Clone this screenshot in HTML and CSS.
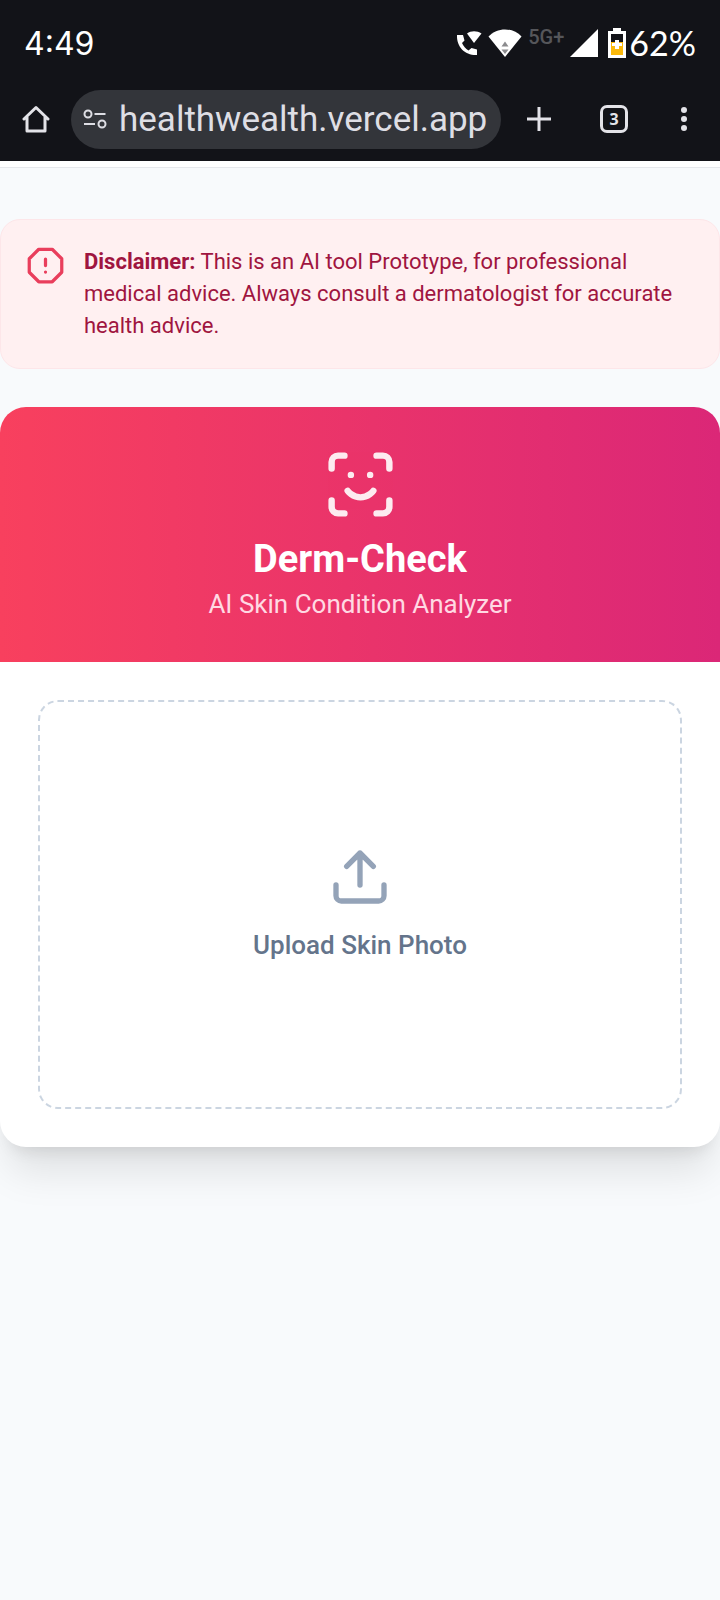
FILE: index.html
```html
<!DOCTYPE html>
<html lang="en">
  <head>
    <meta charset="utf-8">
    <meta name="viewport" content="width=device-width, initial-scale=1">
    <title>Derm-Check</title>
    <link rel="stylesheet" href="styles.css">
  </head>

  <body>
    <header class="browser">
      <div class="status-bar">
        <span class="clock">4:49</span>
        <div class="status-icons">
          <!-- wifi calling -->
          <svg width="26" height="26" viewBox="0 0 26 26" fill="#fff">
            <path d="M1 5C.5 17 9 25.500 21 25V19.500L15.500 18L12.500 20.500C9.500 18.500 7.500 16 6 13L8.500 10.500L7 5Z"/>
            <path d="M11 3.500C15 .5 21 .5 25.500 3.500L18 13Z"/>
          </svg>
          <!-- wifi -->
          <svg width="34" height="28" viewBox="0 0 34 28">
            <path d="M.5 7.500C9 -2 25 -2 33.500 7.500L17 28Z" fill="#fff"/>
            <path d="M17 12.500L20.500 17.500H13.500ZM17 25L13.500 20.500H20.500Z" fill="#8b8b8e"/>
          </svg>
          <span class="network">5G+</span>
          <!-- signal -->
          <svg width="28" height="28" viewBox="0 0 28 28">
            <path d="M28 0V28H0Z" fill="#fff"/>
          </svg>
          <div class="battery">
            <svg width="18" height="30" viewBox="0 0 18 30">
              <path d="M5 0H13V3H18V30H0V3H5Z" fill="#fff"/>
              <path d="M3 6H15V14H3Z" fill="#121318"/>
              <path d="M3 14H15V27H3Z" fill="#fbb90b"/>
              <path d="M7 12H11V15H14V18H11V21H7V18H4V15H7Z" fill="#fff"/>
            </svg>
            <span>62%</span>
          </div>
        </div>
      </div>

      <div class="toolbar">
        <button class="tool-button" type="button" aria-label="Home">
          <svg width="28" height="28" viewBox="0 0 28 28" fill="none" stroke="#e3e3e8" stroke-width="3" stroke-linecap="round" stroke-linejoin="round">
            <path d="M2 14L14 2.500L26 14M5 12V26H23V12"/>
          </svg>
        </button>
        <div class="address">
          <svg width="24" height="20" viewBox="0 0 24 20" fill="none" stroke="#dedee4" stroke-width="2">
            <circle cx="5" cy="5" r="3.500"/>
            <path d="M11.500 5H22.500M1 15H12"/>
            <circle cx="19" cy="15" r="3.500"/>
          </svg>
          <input class="address-input" type="text" aria-label="Address" value="healthwealth.vercel.app">
        </div>
        <div class="tools">
          <button class="tool-button" type="button" aria-label="New tab">
            <svg width="24" height="24" viewBox="0 0 24 24" fill="none" stroke="#e3e3e8" stroke-width="3">
              <path d="M12 0V24M0 12H24"/>
            </svg>
          </button>
          <button class="tabs-button" type="button" aria-label="Tabs">3</button>
          <button class="tool-button menu-button" type="button" aria-label="Menu">
            <svg width="8" height="26" viewBox="0 0 8 26" fill="#e3e3e8">
              <circle cx="4" cy="4" r="3"/>
              <circle cx="4" cy="13" r="3"/>
              <circle cx="4" cy="22" r="3"/>
            </svg>
          </button>
        </div>
      </div>
    </header>

    <div class="nav-edge"></div>

    <main class="content">
      <div class="disclaimer">
        <svg width="39" height="39" viewBox="0 0 24 24" fill="none" stroke="#e93e5c" stroke-width="2" stroke-linecap="round" stroke-linejoin="round">
          <path d="M7.860 2H16.140L22 7.860V16.140L16.140 22H7.860L2 16.140V7.860ZM12 8V12M12 16H12.010"/>
        </svg>
        <p class="disclaimer-text">
          <strong>Disclaimer:</strong> This is an AI tool Prototype, for professional medical advice. Always consult a dermatologist for accurate health advice.
        </p>
      </div>

      <section class="card">
        <div class="card-header">
          <svg class="face-icon" width="77" height="77" viewBox="0 0 24 24" fill="none" stroke="#fff" stroke-width="2" stroke-linecap="round" stroke-linejoin="round">
            <path d="M3 7V5a2 2 0 0 1 2-2h2M17 3h2a2 2 0 0 1 2 2v2M21 17v2a2 2 0 0 1-2 2h-2M7 21H5a2 2 0 0 1-2-2v-2"/>
            <path d="M8 14s1.500 2 4 2 4-2 4-2M9 9h.010M15 9h.010"/>
          </svg>
          <h1 class="title">Derm-Check</h1>
          <p class="subtitle">AI Skin Condition Analyzer</p>
        </div>

        <div class="card-body">
          <label class="upload" for="photo">
            <svg width="64" height="64" viewBox="0 0 24 24" fill="none" stroke="#94a3b8" stroke-width="2" stroke-linecap="round" stroke-linejoin="round">
              <path d="M21 15v4a2 2 0 0 1-2 2H5a2 2 0 0 1-2-2v-4M17 8l-5-5-5 5M12 3v12"/>
            </svg>
            <span class="upload-text">Upload Skin Photo</span>
            <input class="upload-input" type="file" id="photo" accept="image/*">
          </label>
        </div>
      </section>
    </main>
  </body>
</html>
```

FILE: styles.css
```css
* {
  box-sizing: border-box;
}
body {
  margin: 0;
  min-height: 100vh;
  background-color: #f8fafc;
  font-family: Roboto, "Liberation Sans", sans-serif;
}
svg {
  display: block;
  flex-shrink: 0;
}
button {
  padding: 0;
  border: none;
  background: none;
  cursor: pointer;
}

/* browser bars */
.browser {
  background-color: #121318;
  padding-bottom: 12px;
}
.status-bar {
  display: flex;
  justify-content: space-between;
  align-items: center;
  height: 86px;
  margin-bottom: 3px;
  padding: 0 24px;
  color: #fff;
}
.clock {
  font-family: Inter, sans-serif;
  font-size: 32px;
}
.status-icons {
  display: flex;
  align-items: center;
  gap: 6px;
}
.network {
  padding-bottom: 12px;
  color: #55565a;
  font-size: 20px;
  font-weight: 500;
}
.battery {
  display: flex;
  align-items: center;
  gap: 3px;
  margin-left: 4px;
  font-family: Lato, sans-serif;
  font-size: 34px;
  line-height: 38px;
}
.toolbar {
  display: flex;
  align-items: center;
  height: 60px;
  padding: 0 27px 0 22px;
}
.tool-button {
  display: flex;
  align-items: center;
  justify-content: center;
  min-width: 28px;
  height: 48px;
}
.menu-button {
  min-width: 18px;
}
.address {
  display: flex;
  align-items: center;
  flex: 1;
  gap: 12px;
  min-width: 0;
  height: 59px;
  margin-left: 21px;
  padding: 0 12px;
  border-radius: 30px;
  background-color: #33353a;
}
.address-input {
  flex: 1;
  min-width: 0;
  padding: 0;
  border: none;
  outline: none;
  background: none;
  color: #dedee4;
  font-family: Roboto, sans-serif;
  font-size: 35px;
}
.tools {
  display: flex;
  align-items: center;
  gap: 47px;
  margin-left: 24px;
}
.tabs-button {
  width: 28px;
  height: 28px;
  border: 3px solid #e3e3e8;
  border-radius: 7px;
  color: #e3e3e8;
  font-family: "Noto Sans", sans-serif;
  font-size: 16px;
  font-weight: 700;
  line-height: 22px;
}

/* bottom edge of the site nav */
.nav-edge {
  height: 7px;
  background-color: #fff;
  border-bottom: 1px solid #e6e8ec;
}

.content {
  padding: 51px 0;
}
.disclaimer {
  display: flex;
  gap: 19px;
  padding: 26px 25px;
  border: 1px solid #fde6e9;
  border-radius: 20px;
  background-color: #fff0f1;
}
.disclaimer-text {
  margin: 0;
  color: #9f1540;
  font-size: 22px;
  line-height: 32px;
}
.card {
  margin-top: 38px;
  border-radius: 26px;
  background-color: #fff;
  overflow: hidden;
  box-shadow: 0 32px 40px -8px rgba(0, 0, 0, 0.1),
    0 13px 16px -10px rgba(0, 0, 0, 0.1);
}
.card-header {
  display: flex;
  flex-direction: column;
  align-items: center;
  padding: 39px;
  background-image: linear-gradient(to right, #f8405e, #db2777);
  color: #fff;
}
.face-icon {
  margin-bottom: 11px;
  opacity: 0.9;
}
.title {
  margin: 0;
  font-size: 38px;
  font-weight: 700;
  line-height: 51px;
}
.subtitle {
  margin: 0;
  color: #ffd9e3;
  font-size: 26px;
  line-height: 38px;
}
.card-body {
  padding: 38px;
}
.upload {
  display: flex;
  flex-direction: column;
  align-items: center;
  gap: 17px;
  padding: 143px 0;
  border: 2px dashed #cbd5e1;
  border-radius: 20px;
  cursor: pointer;
  position: relative;
}
.upload-text {
  color: #64748b;
  font-size: 26px;
  font-weight: 500;
  line-height: 38px;
}
.upload-input {
  position: absolute;
  width: 1px;
  height: 1px;
  opacity: 0;
}
```
